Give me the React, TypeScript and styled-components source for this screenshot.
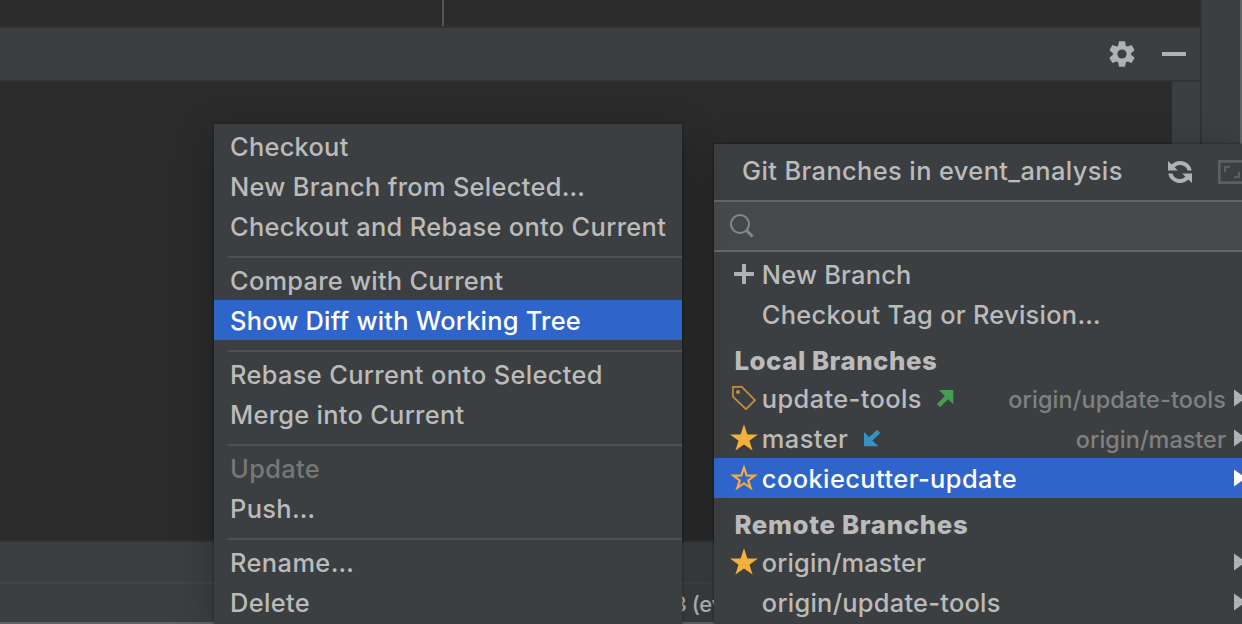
import React from "react";
import styled, { createGlobalStyle, css } from "styled-components";

const GlobalStyle = createGlobalStyle`
  * { box-sizing: border-box; }
  body { margin: 0; overflow: hidden; background: #3c3f41; }
`;

const Screen = styled.div`
  position: relative;
  display: flex;
  width: 1242px;
  height: 624px;
  overflow: hidden;
  background: #3c3f41;
  color: #bbbbbb;
  font-family: Inter, "Liberation Sans", sans-serif;
  font-size: 25.4px;
  font-weight: 470;
  white-space: pre;
`;

const MainArea = styled.div`
  display: flex;
  flex-direction: column;
  flex: 1;
  border-right: 2px solid #323232;
`;

const SideStripe = styled.div`
  width: 40px;
  border-right: 2px solid #616365;
`;

const EditorStrip = styled.div`
  display: flex;
  height: 26px;
  background: #2b2b2b;
`;

const EditorPane = styled.div`
  width: 444px;
  border-right: 2px solid #555555;
`;

const ToolHeader = styled.div`
  display: flex;
  align-items: center;
  justify-content: flex-end;
  gap: 27px;
  height: 56px;
  padding-right: 14px;
  border-top: 2px solid #323232;
  border-bottom: 2px solid #323232;
`;

const ToolBody = styled.div`
  display: flex;
  justify-content: flex-end;
  height: 458px;
  background: #2b2b2b;
`;

const ErrorStripe = styled.div`
  width: 28px;
  background: #3c3f41;
`;

const ToolTabs = styled.div`
  height: 44px;
  border-top: 2px solid #323232;
  border-bottom: 2px solid #464443;
`;

const StatusBar = styled.div`
  display: flex;
  align-items: center;
  height: 40px;
  padding: 2px 0 0 673px;
  border-bottom: 2px solid #616365;
  font-size: 22px;
  font-weight: 450;
  letter-spacing: -0.4px;
`;

const Popup = styled.div<{ $left: number; $top: number; $width: number }>`
  position: absolute;
  left: ${(p) => p.$left}px;
  top: ${(p) => p.$top}px;
  width: ${(p) => p.$width}px;
  height: ${(p) => 624 - p.$top}px;
  background: #3c3f41;
  box-shadow: 0 0 2px rgba(0, 0, 0, 0.55), 0 12px 36px rgba(0, 0, 0, 0.25);
`;

const MenuList = styled.div`
  padding-top: 2px;
`;

const selected = css`
  background: #2f65ca;
  color: #ffffff;
`;

const MenuRow = styled.div<{ $selected?: boolean; $disabled?: boolean }>`
  display: flex;
  align-items: center;
  height: 40px;
  padding: 1px 0 0 16px;
  ${(p) => p.$disabled && "color: #777777;"}
  ${(p) => p.$selected && selected}
`;

const Separator = styled.div`
  height: 2px;
  margin: 10px 0 2px 14px;
  background: #515151;
`;

const Label = styled.span<{ $track: number }>`
  letter-spacing: ${(p) => p.$track}px;
`;

const PopupHeader = styled.div`
  display: flex;
  align-items: center;
  height: 56px;
  padding-left: 28px;
`;

const HeaderTitle = styled(Label)`
  flex: none;
  width: 426px;
  padding-bottom: 3px;
`;

const HeaderActions = styled.div`
  display: flex;
  flex: none;
  gap: 26px;
`;

const SearchField = styled.div`
  display: flex;
  align-items: center;
  height: 52px;
  margin-bottom: 2px;
  padding-left: 16px;
  border-top: 2px solid #646464;
  border-bottom: 2px solid #646464;
  background: #45494a;
`;

const BranchRow = styled.div<{ $selected?: boolean }>`
  display: flex;
  align-items: center;
  height: 40px;
  padding-left: 14px;
  ${(p) => p.$selected && selected}
`;

const IconSlot = styled.span`
  display: flex;
  align-items: center;
  justify-content: center;
  width: 32px;
  height: 28px;
`;

const BranchName = styled(Label)`
  margin-left: 1.8px;
  padding-top: 1px;
`;

const Tracking = styled.span`
  display: flex;
  margin-left: 15.2px;
`;

const Remote = styled(Label)`
  margin-left: auto;
  padding: 2px 8px 0 0;
  color: #808080;
  font-size: 23.4px;
`;

const Submenu = styled.span<{ $end: boolean }>`
  display: flex;
  margin-left: ${(p) => (p.$end ? "auto" : "0")};
`;

const SectionTitle = styled.div`
  height: 44px;
  padding: 11px 0 0 20.4px;
  line-height: 32px;
  font-size: 25.8px;
  font-weight: 770;
`;

const GearIcon = () => (
  <svg width="26" height="26" viewBox="-13 -13 26 26">
    <g fill="#afb1b3">
      {[0, 60, 120, 180, 240, 300].map((a) => (
        <path key={a} d="M-3-12.8h6l.9 5h-7.8z" transform={`rotate(${a})`} />
      ))}
      <circle r="9.2" />
    </g>
    <circle r="4.6" fill="#3c3f41" />
  </svg>
);

const MinusIcon = () => (
  <svg width="24" height="24">
    <path d="M0 10h24v4H0z" fill="#afb1b3" />
  </svg>
);

const RefreshIcon = () => (
  <svg width="24" height="24" viewBox="0 0 24 24">
    <g fill="#afb1b3">
      <path d="M0 1v9.5h9.7L6.6 7.3A7.8 7.8 0 0 1 19.6 10.5h4.2A12 12 0 0 0 3.7 4.5z" />
      <path d="M24 23v-9.5h-9.7l3.1 3.2A7.8 7.8 0 0 1 4.4 13.5H.2A12 12 0 0 0 20.3 19.5z" />
    </g>
  </svg>
);

const FitIcon = () => (
  <svg width="28" height="24" viewBox="0 0 28 24">
    <g fill="none" stroke="#5d5e5f">
      <path d="M1.4 1.4h25.2v21.2H1.4z" strokeWidth="2.8" />
      <path d="M7 12V7h5M21 12v5h-5" strokeWidth="2" />
    </g>
  </svg>
);

const SearchIcon = () => (
  <svg width="24" height="24" viewBox="0 0 24 24" fill="none" stroke="#7f8b91">
    <circle cx="10" cy="10" r="9" strokeWidth="2" />
    <path d="M16.5 16.5l6 6" strokeWidth="3" />
  </svg>
);

const PlusIcon = () => (
  <svg width="20" height="20">
    <path d="M8 0h4v8h8v4h-8v8H8v-8H0V8h8z" fill="#afb1b3" />
  </svg>
);

const TagIcon = () => (
  <svg width="24" height="24" viewBox="0 0 24 24">
    <path d="M.9.9h8.9l13.2 13.3-9 9L.9 10.6z" fill="none" stroke="#c2913e" strokeWidth="1.7" />
    <circle cx="6" cy="6" r="2" fill="#c2913e" />
  </svg>
);

const STAR = "M14 .3l3.4 10.1 10.5.1-8.4 6.3 3.1 9.6L14 20.5l-8.6 5.9 3.1-9.6L.1 10.5l10.5-.1z";

const StarIcon = ({ hollow }: { hollow?: boolean }) => (
  <svg width="28" height="28" viewBox="0 0 28 28">
    <path d={STAR} fill="#f4af3d" />
    {hollow && (
      <path
        d="M14 7.1l1.9 5.5 5.6.1-4.5 3.4 1.7 5.3L14 18.1l-4.7 3.3 1.7-5.3-4.5-3.4 5.6-.1z"
        fill="#2f65ca"
      />
    )}
  </svg>
);

const OutgoingIcon = () => (
  <svg width="17" height="17" viewBox="0 0 17 17">
    <path d="M2 0h14.3v14.3L11.2 9.2 3.1 17.1 0 13.9 7.9 5.9z" fill="#499c54" />
  </svg>
);

const IncomingIcon = () => (
  <svg width="17" height="17" viewBox="0 0 17 17">
    <path d="M14.3 16.3H0V2L5.1 7.1 13.2-.1 16.3 3.1 8.4 10.4z" fill="#3592c4" />
  </svg>
);

const SubmenuArrow = ({ color }: { color: string }) => (
  <svg width="8" height="18" viewBox="0 0 8 18">
    <path d="M0 .6l12 8.4-12 8.4z" fill={color} />
  </svg>
);

type MenuItem = { text: string; track: number; selected?: boolean; disabled?: boolean };

const menuGroups: MenuItem[][] = [
  [
    { text: "Checkout", track: 0.28 },
    { text: "New Branch from Selected…", track: 0.31 },
    { text: "Checkout and Rebase onto Current", track: 0.34 },
  ],
  [
    { text: "Compare with Current", track: 0.26 },
    { text: "Show Diff with Working Tree", track: 0.23, selected: true },
  ],
  [
    { text: "Rebase Current onto Selected", track: 0.35 },
    { text: "Merge into Current", track: 0.29 },
  ],
  [
    { text: "Update", track: 0.35, disabled: true },
    { text: "Push…", track: 0.35 },
  ],
  [
    { text: "Rename…", track: 0.42 },
    { text: "Delete", track: 0.35 },
  ],
];

type BranchProps = {
  name: string;
  track: number;
  icon?: React.ReactNode;
  tracking?: React.ReactNode;
  remote?: string;
  remoteTrack?: number;
  selected?: boolean;
  submenu?: boolean;
};

const Branch = (p: BranchProps) => (
  <BranchRow $selected={p.selected}>
    <IconSlot>{p.icon}</IconSlot>
    <BranchName $track={p.track}>{p.name}</BranchName>
    {p.tracking && <Tracking>{p.tracking}</Tracking>}
    {p.remote && <Remote $track={p.remoteTrack ?? 0}>{p.remote}</Remote>}
    {p.submenu && (
      <Submenu $end={!p.remote}>
        <SubmenuArrow color={p.selected ? "#ffffff" : "#afb1b3"} />
      </Submenu>
    )}
  </BranchRow>
);

export default function App() {
  return (
    <Screen>
      <GlobalStyle />
      <MainArea>
        <EditorStrip>
          <EditorPane />
        </EditorStrip>
        <ToolHeader>
          <GearIcon />
          <MinusIcon />
        </ToolHeader>
        <ToolBody>
          <ErrorStripe />
        </ToolBody>
        <ToolTabs />
        <StatusBar>3 (ev</StatusBar>
      </MainArea>
      <SideStripe />

      <Popup $left={714} $top={144} $width={528}>
        <PopupHeader>
          <HeaderTitle $track={0.4}>Git Branches in event_analysis</HeaderTitle>
          <HeaderActions>
            <RefreshIcon />
            <FitIcon />
          </HeaderActions>
        </PopupHeader>
        <SearchField>
          <SearchIcon />
        </SearchField>
        <Branch icon={<PlusIcon />} name="New Branch" track={0.22} />
        <Branch name="Checkout Tag or Revision…" track={0.28} />
        <SectionTitle>
          <Label $track={0.54}>Local Branches</Label>
        </SectionTitle>
        <Branch
          icon={<TagIcon />}
          name="update-tools"
          track={0.4}
          tracking={<OutgoingIcon />}
          remote="origin/update-tools"
          remoteTrack={0.12}
          submenu
        />
        <Branch
          icon={<StarIcon />}
          name="master"
          track={0.46}
          tracking={<IncomingIcon />}
          remote="origin/master"
          remoteTrack={0.04}
          submenu
        />
        <Branch icon={<StarIcon hollow />} name="cookiecutter-update" track={0.44} selected submenu />
        <SectionTitle>
          <Label $track={0.67}>Remote Branches</Label>
        </SectionTitle>
        <Branch icon={<StarIcon />} name="origin/master" track={0.14} submenu />
        <Branch name="origin/update-tools" track={0.26} submenu />
      </Popup>

      <Popup $left={214} $top={124} $width={468}>
        <MenuList>
          {menuGroups.map((group, i) => (
            <React.Fragment key={i}>
              {i > 0 && <Separator />}
              {group.map((item) => (
                <MenuRow key={item.text} $selected={item.selected} $disabled={item.disabled}>
                  <Label $track={item.track}>{item.text}</Label>
                </MenuRow>
              ))}
            </React.Fragment>
          ))}
        </MenuList>
      </Popup>
    </Screen>
  );
}
